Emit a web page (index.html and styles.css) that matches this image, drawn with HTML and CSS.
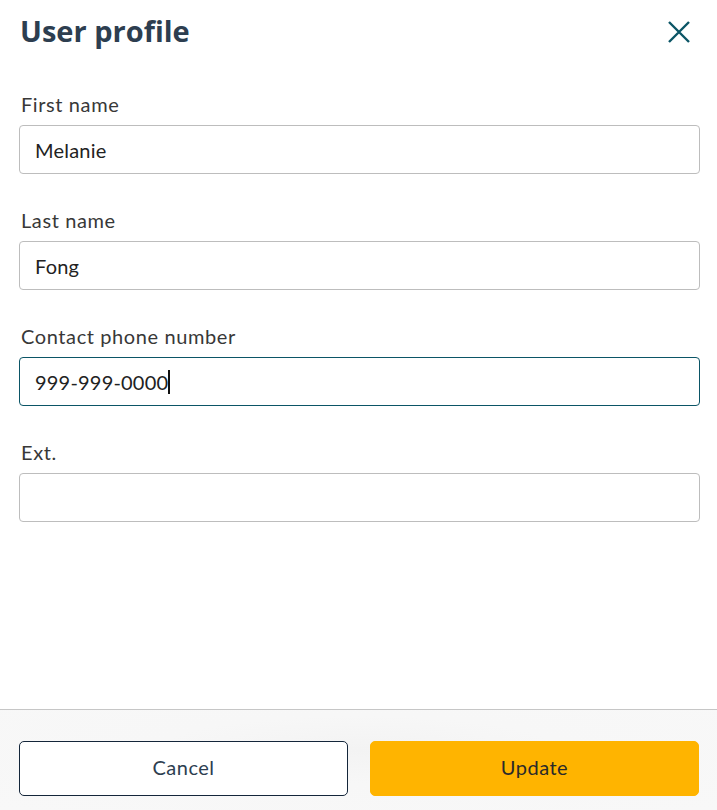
FILE: index.html
```html
<!DOCTYPE html>
<html lang="en">
<head>
<meta charset="utf-8">
<title>User profile</title>
<link rel="stylesheet" href="styles.css">
</head>
<body>
<div class="dialog">
  <header class="header">
    <h1 class="title">User profile</h1>
    <button class="close" aria-label="Close">
      <svg width="24" height="24" viewBox="0 0 24 24"><path d="M2 2 L22 22 M22 2 L2 22" stroke="#0b5566" stroke-width="2.4" fill="none"/></svg>
    </button>
  </header>
  <main class="form">
    <div class="field">
      <label class="label">First name</label>
      <input class="input" type="text" value="Melanie">
    </div>
    <div class="field">
      <label class="label">Last name</label>
      <input class="input" type="text" value="Fong">
    </div>
    <div class="field">
      <label class="label">Contact phone number</label>
      <div class="input focused">999-999-0000<span class="caret"></span></div>
    </div>
    <div class="field">
      <label class="label">Ext.</label>
      <input class="input" type="text" value="">
    </div>
  </main>
  <footer class="footer">
    <button class="btn btn-cancel">Cancel</button>
    <button class="btn btn-update">Update</button>
  </footer>
</div>
</body>
</html>
```
FILE: styles.css
```css
* { box-sizing: border-box; }
html, body { margin: 0; padding: 0; background: #fff; }
body { font-family: Lato, "Open Sans", sans-serif; }
.dialog {
  width: 717px;
  height: 810px;
  display: flex;
  flex-direction: column;
}
.header {
  display: flex;
  justify-content: space-between;
  align-items: flex-start;
  padding: 11px 26px 0 20px;
  height: 93px;
}
.title {
  margin: 0;
  font-family: "Open Sans", sans-serif;
  font-weight: 700;
  font-size: 29px;
  line-height: 40px;
  color: #2d3e50;
}
.close {
  border: 0;
  background: none;
  padding: 0;
  margin-top: 9px;
  width: 24px;
  height: 24px;
  cursor: pointer;
}
.close svg { display: block; }
.form {
  flex: 1;
  padding: 0 17px 0 19px;
  display: flex;
  flex-direction: column;
  gap: 35px;
}
.field { display: flex; flex-direction: column; }
.label {
  font-size: 20px;
  line-height: 22px;
  letter-spacing: 0.6px;
  color: #383838;
  padding-left: 2px;
  margin-bottom: 10px;
}
.input {
  height: 49px;
  width: 100%;
  border: 1px solid #bdbdbd;
  border-radius: 4px;
  padding: 0 15px;
  font-family: Lato, sans-serif;
  font-size: 20px;
  letter-spacing: 0.2px;
  color: #222;
  background: #fff;
  outline: none;
  display: flex;
  align-items: center;
}
.input.focused { border-color: #0b5566; }
.caret {
  display: inline-block;
  width: 2px;
  height: 24px;
  background: #111;
}
.footer {
  height: 101px;
  border-top: 1px solid #c6c6c6;
  background: radial-gradient(ellipse at 50% 40%, #f3f3f3 0%, #f7f7f7 40%, #f8f8f8 100%);
  padding: 31px 18px 0 19px;
  display: grid;
  grid-template-columns: 1fr 1fr;
  column-gap: 22px;
  align-items: start;
}
.btn {
  height: 55px;
  border-radius: 5px;
  font-family: Lato, sans-serif;
  font-size: 20px;
  letter-spacing: 0.5px;
  padding: 0 0 3px;
  color: #2d3e50;
  cursor: pointer;
}
.btn-cancel {
  background: #fff;
  border: 1px solid #14263a;
}
.btn-update {
  background: #ffb400;
  border: 1px solid #ffb400;
  color: #2a2a2a;
}
```
